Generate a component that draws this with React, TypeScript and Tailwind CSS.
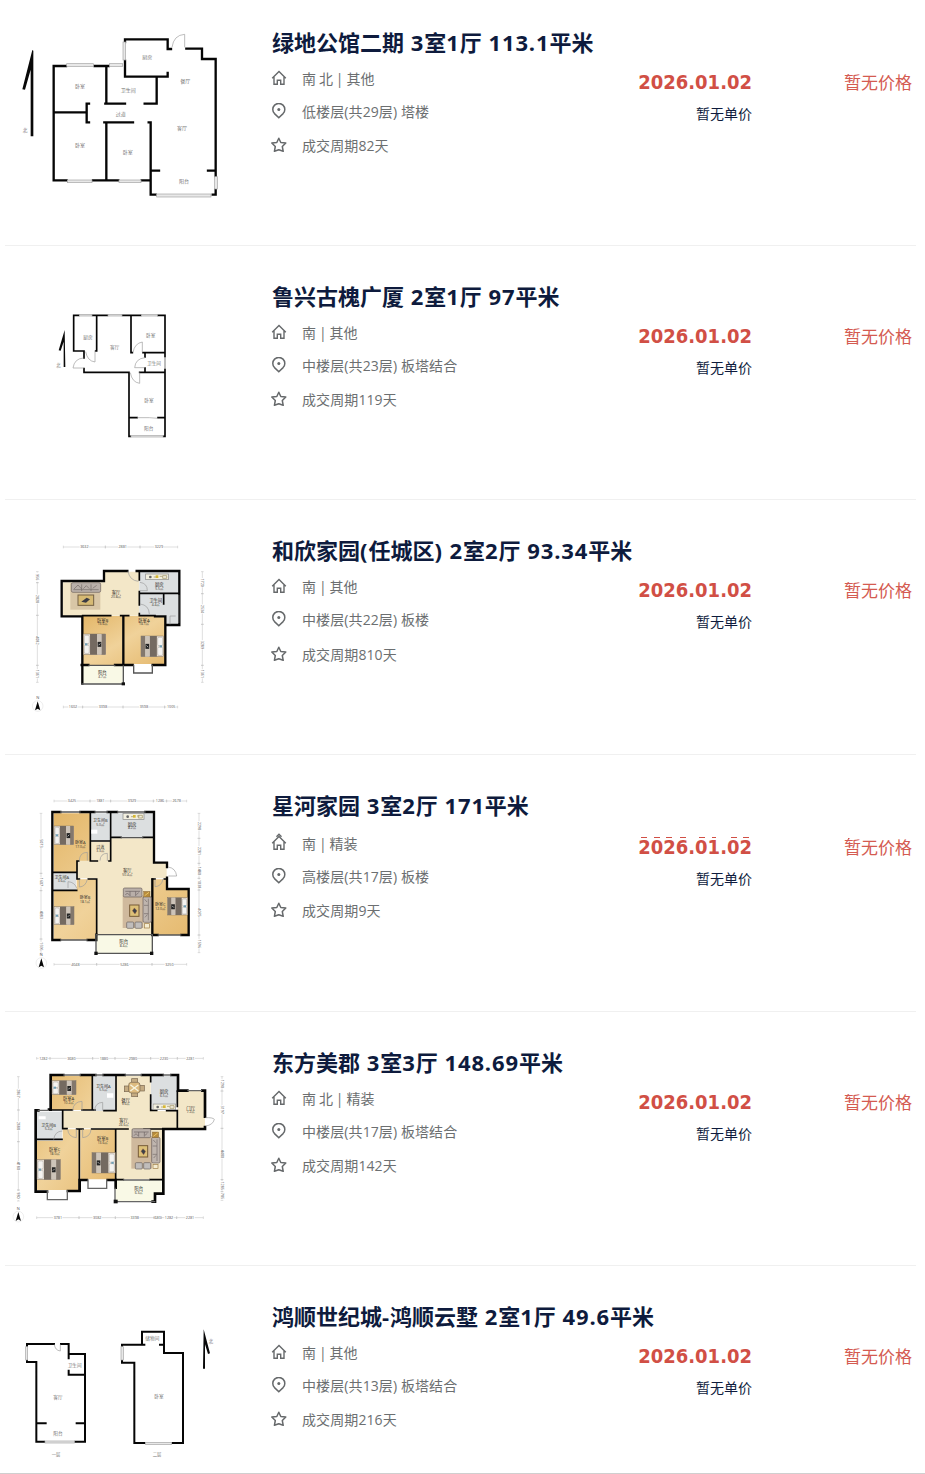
import type {ReactNode} from 'react'
import clsx from 'clsx'

type Listing = {
  title: string
  facing: string
  floor: string
  cycle: string
  plan: ReactNode
  rowClass: string
  planClass: string
  infoClass: string
  facingClass: string
  floorClass: string
  cycleClass: string
  priceClass: string
  seam?: boolean
}

const listings: Listing[] = [
  {
    title: '绿地公馆二期 3室1厅 113.1平米',
    facing: '南 北 | 其他',
    floor: '低楼层(共29层) 塔楼',
    cycle: '成交周期82天',
    plan: <PlanOne />,
    rowClass: 'h-[246px]',
    planClass: 'pt-[20px]',
    infoClass: 'pt-[26px]',
    facingClass: 'mt-[11px]',
    floorClass: 'mt-[13px]',
    cycleClass: 'mt-[14px]',
    priceClass: 'pt-[68px]',
  },
  {
    title: '鲁兴古槐广厦 2室1厅 97平米',
    facing: '南 | 其他',
    floor: '中楼层(共23层) 板塔结合',
    cycle: '成交周期119天',
    plan: <PlanTwo />,
    rowClass: 'h-[254px]',
    planClass: 'pt-[54px]',
    infoClass: 'pt-[34px]',
    facingClass: 'mt-[11px]',
    floorClass: 'mt-[13px]',
    cycleClass: 'mt-[14px]',
    priceClass: 'pt-[76px]',
  },
  {
    title: '和欣家园(任城区) 2室2厅 93.34平米',
    facing: '南 | 其他',
    floor: '中楼层(共22层) 板楼',
    cycle: '成交周期810天',
    plan: <PlanThree />,
    rowClass: 'h-[255px]',
    planClass: 'pt-[35px]',
    infoClass: 'pt-[34px]',
    facingClass: 'mt-[11px]',
    floorClass: 'mt-[13px]',
    cycleClass: 'mt-[15px]',
    priceClass: 'pt-[76px]',
  },
  {
    title: '星河家园 3室2厅 171平米',
    facing: '南 | 精装',
    floor: '高楼层(共17层) 板楼',
    cycle: '成交周期9天',
    plan: <PlanFour />,
    rowClass: 'h-[257px]',
    planClass: 'pt-[35px]',
    infoClass: 'pt-[34px]',
    facingClass: 'mt-[13px]',
    floorClass: 'mt-[13px]',
    cycleClass: 'mt-[14px]',
    priceClass: 'pt-[78px]',
    seam: true,
  },
  {
    title: '东方美郡 3室3厅 148.69平米',
    facing: '南 北 | 精装',
    floor: '中楼层(共17层) 板塔结合',
    cycle: '成交周期142天',
    plan: <PlanFive />,
    rowClass: 'h-[254px]',
    planClass: 'pt-[33px]',
    infoClass: 'pt-[34px]',
    facingClass: 'mt-[11px]',
    floorClass: 'mt-[13px]',
    cycleClass: 'mt-[14px]',
    priceClass: 'pt-[76px]',
  },
  {
    title: '鸿顺世纪城-鸿顺云墅 2室1厅 49.6平米',
    facing: '南 | 其他',
    floor: '中楼层(共13层) 板塔结合',
    cycle: '成交周期216天',
    plan: <PlanSix />,
    rowClass: 'h-[208px]',
    planClass: 'pt-[44px]',
    infoClass: 'pt-[34px]',
    facingClass: 'mt-[11px]',
    floorClass: 'mt-[13px]',
    cycleClass: 'mt-[14px]',
    priceClass: 'pt-[76px]',
  },
]

export default function App() {
  return (
    <main className="h-[1474px] w-[925px] overflow-hidden border-b border-[#cfcfcf] bg-white font-['Open_Sans','Noto_Sans_CJK_SC',sans-serif]">
      {listings.map((listing) => (
        <ListingRow key={listing.title} listing={listing} />
      ))}
    </main>
  )
}

function ListingRow(props: {listing: Listing}) {
  const {listing} = props
  return (
    <article
      className={clsx(
        'mr-[9px] ml-[5px] flex border-b border-[#f0f0f0] last:border-b-0',
        listing.rowClass,
      )}
    >
      <div className={clsx('-ml-[5px] w-[240px] shrink-0', listing.planClass)}>
        {listing.plan}
      </div>
      <div
        className={clsx(
          'ml-[32px] w-[400px] shrink-0 whitespace-nowrap',
          listing.infoClass,
        )}
      >
        <h2 className="h-8 text-[22px] leading-8 font-bold text-[#0e1b3d] [word-spacing:1px]">
          {/* Digits and punctuation are set a little wider than the hanzi */}
          {listing.title.split(/([\d.()-]+)/).map((part, index) => (
            <span key={index} className={index % 2 ? 'tracking-[0.9px]' : ''}>
              {part}
            </span>
          ))}
        </h2>
        <InfoLine
          className={clsx('[word-spacing:-0.7px]', listing.facingClass)}
          icon={<HouseIcon seam={listing.seam} />}
        >
          {listing.facing}
        </InfoLine>
        <InfoLine
          className={clsx('tracking-[0.1px]', listing.floorClass)}
          icon={<PinIcon />}
        >
          {listing.floor}
        </InfoLine>
        <InfoLine
          className={clsx('tracking-[0.1px]', listing.cycleClass)}
          icon={<StarIcon />}
        >
          {listing.cycle}
        </InfoLine>
      </div>
      <div
        className={clsx(
          'flex flex-1 items-start justify-between pr-[4px] whitespace-nowrap',
          listing.priceClass,
        )}
      >
        <div className="-ml-[34px] w-[114px] text-right">
          <div className="relative h-7 font-['DejaVu_Sans_Condensed','DejaVu_Sans',sans-serif] text-[20px] leading-7 font-bold text-[#d14f45]">
            2026.01.02
            {listing.seam && (
              <Seam d="M3 .5h6M16 .5h6M28 .5h6M42 .5h6M61 .5h6M74 .5h4M93 .5h6M105 .5h6" />
            )}
          </div>
          <div className="mt-2 h-5 text-sm leading-5 text-[#0e1b3d]">
            暂无单价
          </div>
        </div>
        <div className="relative mt-px h-7 text-[17px] leading-7 text-[#d45b51]">
          暂无价格
          {listing.seam && <Seam d="M4 .5h1.5" />}
        </div>
      </div>
    </article>
  )
}

// Short ticks that sit just above the glyphs
function Seam(props: {d: string}) {
  return (
    <svg
      aria-hidden
      className="absolute top-[4px] left-0 h-px w-[114px]"
      viewBox="0 0 114 1"
    >
      <path d={props.d} stroke="#d14f45" />
    </svg>
  )
}

function InfoLine(props: {
  className: string
  icon: ReactNode
  children: ReactNode
}) {
  return (
    <div
      className={clsx(
        'flex h-5 items-center text-sm leading-5 text-[#6c6f71]',
        props.className,
      )}
    >
      <span className="-ml-px w-[31px]">{props.icon}</span>
      <span>{props.children}</span>
    </div>
  )
}

function HouseIcon(props: {seam?: boolean}) {
  return (
    <svg
      className="mb-[2px] h-4 w-4 overflow-visible"
      viewBox="0 0 16 16"
      fill="none"
      stroke="#66696b"
      strokeWidth="1.4"
    >
      <path d="M1.2 8.3 8 1.4l6.8 6.9M3 6.8v7.5h3.3v-4h3.4v4H13V6.8" />
      {props.seam && <path d="M5.5 1.8 8-.8l2.5 2.6" />}
    </svg>
  )
}

function PinIcon() {
  return (
    <svg
      className="mb-[3px] h-4 w-4"
      viewBox="0 0 16 16"
      fill="none"
      stroke="#66696b"
      strokeWidth="1.5"
    >
      <path d="M7.8 14.8 3.5 10.6a6 6 0 1 1 8.6 0Z" />
      <circle cx="7.8" cy="6.6" r="1.5" fill="#66696b" stroke="none" />
    </svg>
  )
}

function StarIcon() {
  return (
    <svg
      className="mb-[2px] h-4 w-4"
      viewBox="0 0 16 16"
      fill="none"
      stroke="#66696b"
      strokeWidth="1.5"
      strokeLinejoin="round"
    >
      <path d="m7.8 1.3 2 4.2 5 .5-3.5 3.5.9 4.8-4.4-1.6-4.4 1.6.9-4.8L.8 6l5-.5Z" />
    </svg>
  )
}

/* Floor plan primitives, three drawing units per pixel */

function Plan(props: {x?: number; height: number; children: ReactNode}) {
  return (
    <svg
      width="240"
      height={props.height}
      viewBox={`${-(props.x ?? 0) * 3} 0 720 ${props.height * 3}`}
      fill="none"
    >
      <defs>
        <linearGradient id="wood" x1="0" y1="0" x2="1" y2="1">
          <stop offset="0" stopColor="#e3b668" />
          <stop offset=".5" stopColor="#f0d29a" />
          <stop offset="1" stopColor="#e5b96e" />
        </linearGradient>
      </defs>
      {props.children}
    </svg>
  )
}

function Walls(props: {d: string; w?: number; color?: string}) {
  return (
    <path
      d={props.d}
      stroke={props.color ?? '#050505'}
      strokeWidth={props.w ?? 7}
      strokeLinecap="square"
    />
  )
}

function Thin(props: {d: string}) {
  return <path d={props.d} stroke="#9b9b9b" strokeWidth="2" />
}

function Windows(props: {boxes: number[][]}) {
  return props.boxes.map(([x, y, w, h]) => (
    <rect
      key={`${x}-${y}`}
      x={x}
      y={y}
      width={w}
      height={h}
      fill="#e8e8e8"
      stroke="#a3a3a3"
      strokeWidth="2"
    />
  ))
}

function Label(props: {
  x: number
  y: number
  text: string
  area?: string
  size?: number
}) {
  return (
    <text
      x={props.x}
      y={props.y}
      fontSize={props.size ?? 15}
      textAnchor="middle"
      fill={props.area ? '#33302b' : '#777'}
    >
      {props.text}
      {props.area && (
        <tspan x={props.x} dy="11" fontSize="10">
          {props.area}
        </tspan>
      )}
    </text>
  )
}

function Floor(props: {d: string; kind: 'wood' | 'hall' | 'tile' | 'deck'}) {
  const fills = {
    wood: 'url(#wood)',
    hall: '#f3e7c8',
    tile: '#dcdfe0',
    deck: '#f9f9e6',
  }
  return <path d={props.d} fill={fills[props.kind]} />
}

// Headboard on the left; flip puts it on the right
function Bed(props: {x: number; y: number; w: number; h: number; flip?: boolean}) {
  const {x, y, w, h, flip} = props
  return (
    <g
      transform={
        flip ? `translate(${x + w} ${y}) scale(-1 1)` : `translate(${x} ${y})`
      }
    >
      <rect width={w} height={h} fill="#e6ddd3" stroke="#81735f" strokeWidth="1.5" />
      <rect x="3" y="4" width={w * 0.22} height={h * 0.4} rx="4" fill="#f5f3f0" stroke="#8d8885" />
      <rect x="3" y={h * 0.54} width={w * 0.22} height={h * 0.4} rx="4" fill="#f5f3f0" stroke="#8d8885" />
      <path d={`M5 ${h * 0.5}h7`} stroke="#6fa0b8" strokeWidth="6" />
      <rect x={w * 0.3} width={w * 0.32} height={h} fill="#746a61" />
      <rect x={w * 0.62} width={w * 0.2} height={h} fill="#cdc4b9" />
      <rect x={w * 0.82} width={w * 0.18} height={h} fill="#83786d" />
      <rect x={w * 0.64} y={h * 0.38} width="11" height="15" fill="#242424" />
      <path d={`M${w * 0.64 + 3} ${h * 0.38 + 10}l5-5`} stroke="#eee" strokeWidth="2" />
    </g>
  )
}

function SeatingArea(props: {x: number; y: number}) {
  return (
    <g transform={`translate(${props.x} ${props.y})`}>
      <rect x="0" y="22" width="62" height="98" fill="#cfb99d" />
      <rect x="2" y="0" width="56" height="27" rx="4" fill="#b9afa9" stroke="#685d59" strokeWidth="2" />
      <path d="M8 10h44M22 10v14M39 10v14M8 21l6-6 7 7M41 20l7-6" stroke="#6b6160" strokeWidth="2" />
      <rect x="61" y="26" width="25" height="77" rx="4" fill="#bfb5ae" stroke="#665a57" strokeWidth="2" />
      <path d="M77 32v65M64 52h13M64 77h13M66 34l7 8M67 88l7-8" stroke="#746b69" strokeWidth="2" />
      <rect x="63" y="10" width="19" height="17" fill="#b78b3c" stroke="#70552d" />
      <path d="m66 23 13-10" stroke="#eac565" strokeWidth="3" />
      <rect x="21" y="51" width="28" height="34" fill="#dcc078" stroke="#765b38" strokeWidth="3" />
      <path d="m29 68 6-8 8 8-6 10Z" fill="#3b4148" stroke="#b35c3f" />
      <rect x="12" y="102" width="21" height="19" rx="3" fill="#c0bdbb" stroke="#68625f" strokeWidth="2" />
      <rect x="37" y="102" width="21" height="19" rx="3" fill="#c0bdbb" stroke="#68625f" strokeWidth="2" />
      <rect x="65" y="107" width="15" height="13" fill="#f4ecd1" stroke="#9b7941" strokeWidth="2" />
    </g>
  )
}

function Stove(props: {x: number; y: number; w: number}) {
  return (
    <g transform={`translate(${props.x} ${props.y})`}>
      <rect width={props.w} height="17" fill="#f2efdf" stroke="#888" strokeWidth="2" />
      <circle cx="14" cy="9" r="4" fill="#666" />
      <path d={`M24 9h8m10-2h8M${props.w - 17} 5v8h12V5Z`} stroke="#9a8d5c" strokeWidth="2" />
      <rect x="30" y="4" width="8" height="8" fill="#d7b733" />
    </g>
  )
}

function Compass(props: {x: number; y: number}) {
  return (
    <g transform={`translate(${props.x} ${props.y})`}>
      <circle r="16" stroke="#ccc" />
      <path d="M0-14 8 13 0 8-8 13Z" fill="#080808" />
      <text y="-20" fontSize="12" fill="#555" textAnchor="middle">
        N
      </text>
    </g>
  )
}

type Dim = [from: number, to: number, value: string]

function Dims(props: {at: number; spans: Dim[]; vertical?: boolean}) {
  return (
    <g
      transform={
        props.vertical ? `translate(${props.at} 0) rotate(90)` : `translate(0 ${props.at})`
      }
    >
      {props.spans.map(([from, to, value]) => (
        <g key={from}>
          <path
            d={`M${from} 0H${(from + to) / 2 - 14}M${(from + to) / 2 + 14} 0H${to}M${from} -4v8M${to} -4v8`}
            stroke="#bcbcbc"
            strokeWidth="1.5"
          />
          <text x={(from + to) / 2} y="4" fontSize="11" fill="#555" textAnchor="middle">
            {value}
          </text>
        </g>
      ))}
    </g>
  )
}

function PlanOne() {
  return (
    <Plan height={190}>
      <path d="M97 90 67 208l8 1 17-60v200h8V92Z" fill="#080808" />
      <Label x={75} y={335} text="北" size={14} />
      <Walls d="M375 66V58H503V87H513M559 86H606V117H647V468M624 452H647M647 509V524H638M467 524H452V307H446M452 452H477M452 481H425M355 481H279M200 481H161V138H198M284 138H326M375 122V170H503V159M319 138V251M316 251H375M434 251H470V170M161 277H260M267 251H260V307H267M313 307H399M319 307V481" />
      <Windows
        boxes={[
          [200, 131, 80, 8],
          [328, 131, 40, 8],
          [369, 66, 8, 54],
          [202, 480, 74, 8],
          [357, 480, 66, 8],
          [470, 522, 163, 9],
          [644, 470, 8, 37],
        ]}
      />
      <Thin d="M516 82q5-37 38-39v39" />
      <Label x={442} y={116} text="厨房" />
      <Label x={556} y={190} text="餐厅" />
      <Label x={240} y={204} text="卧室" />
      <Label x={385} y={217} text="卫生间" />
      <Label x={362} y={287} text="过道" />
      <Label x={546} y={330} text="客厅" />
      <Label x={240} y={382} text="卧室" />
      <Label x={383} y={403} text="卧室" />
      <Label x={552} y={490} text="阳台" />
    </Plan>
  )
}

function PlanTwo() {
  return (
    <Plan x={40} height={150}>
      <path d="m74 90-18 61 6 1 9-27v76h5Z" fill="#080808" />
      <Label x={55} y={202} text="北" size={13} />
      <Walls
        w={5}
        d="M101 46V153H132M132 153V174M132 206V217H267V409M101 46H116M158 46H202M248 46H302M354 46H375V171M170 46V153H167M273 46V158H277M309 158H375M315 158V171M315 204V216M299 217H375M375 207V409M267 409H271M371 409H375M267 353H291M354 353H375"
      />
      <Windows
        boxes={[
          [118, 43, 38, 5],
          [204, 43, 42, 5],
          [304, 43, 48, 5],
          [373, 173, 4, 32],
          [273, 407, 96, 4],
        ]}
      />
      <Thin d="M137 155q5 28 28 31v-32M130 174q-27 2-31 30h32M279 157q5-27 28-31v31M315 173q-29 3-31 30h30M271 218q5 29 28 32v-33M292 353h36l26 2" />
      <Label x={144} y={118} text="厨房" size={14} />
      <Label x={224} y={148} text="客厅" size={14} />
      <Label x={332} y={112} text="卧室" size={14} />
      <Label x={342} y={196} text="卫生间" size={14} />
      <Label x={327} y={306} text="卧室" size={14} />
      <Label x={326} y={391} text="阳台" size={14} />
    </Plan>
  )
}

function PlanThree() {
  return (
    <Plan x={20} height={185}>
      <Dims at={36} spans={[[130, 256, '3632'], [256, 360, '2881'], [360, 473, '3229']]} />
      <Dims at={516} spans={[[130, 188, '1602'], [188, 309, '3398'], [309, 434, '3598'], [434, 473, '1005']]} />
      <Dims vertical at={52} spans={[[110, 143, '956'], [143, 241, '2828'], [241, 391, '4082'], [391, 442, '1361']]} />
      <Dims vertical at={547} spans={[[110, 176, '1720'], [176, 268, '2534'], [268, 391, '3289'], [391, 442, '1361']]} />
      <Compass x={53} y={513} />
      <Floor kind="hall" d="M128 142H250V110H358V242H128Z" />
      <Floor kind="tile" d="M358 110H476V270H438V240H358Z" />
      <Floor kind="wood" d="M188 243H308V390H188ZM312 243H436V387H312Z" />
      <Floor kind="deck" d="M188 393H308V446H188Z" />
      <Walls w={7} d="M187 244H125V138H252V108H322M350 108H478V270H442M187 244V446M185 390H205M285 390H310V244M310 390H338M398 390H436V244H405" />
      <Walls w={5} d="M358 108V135M358 170V210M360 175H475M431 175V207M358 236V242H405M188 242H272M302 242H326" />
      <Walls w={4} color="#555" d="M187 447H310V393M207 391H284M341 391V414H397V391M476 182V262" />
      <rect x="305" y="442" width="10" height="9" fill="#111" />
      <Thin d="M324 108q4 28 31 31M360 142q22 3 22 25h-23M360 207q27 3 28 30M450 268v-25h17" />
      <rect x="151" y="144" width="90" height="80" fill="#d8c6a6" />
      <rect x="154" y="143" width="88" height="29" rx="5" fill="#bab0aa" stroke="#6d615d" strokeWidth="2" />
      <path d="M160 164h76M185 148v20M213 148v20M162 162l12-12 11 12M190 161l9-9 9 9M218 160l12-9" stroke="#746a67" strokeWidth="2" />
      <rect x="174" y="180" width="47" height="31" fill="#d6ba74" stroke="#746044" strokeWidth="3" />
      <path d="m184 200 16-12 10 5-12 10Z" fill="#3a3b44" />
      <Stove x={377} y={117} w={68} />
      <Bed x={190} y={297} w={67} h={62} />
      <Bed x={363} y={303} w={68} h={62} flip />
      <Label x={288} y={178} text="客厅" area="20.8㎡" size={13} />
      <Label x={418} y={154} text="厨房" area="5.5㎡" size={13} />
      <Label x={407} y={202} text="卫生间" area="4.4㎡" size={13} />
      <Label x={248} y={260} text="卧室B" area="13.6㎡" size={13} />
      <Label x={372} y={260} text="卧室A" area="14.1㎡" size={13} />
      <Label x={247} y={417} text="阳台" area="4.7㎡" size={13} />
    </Plan>
  )
}

function PlanFour() {
  return (
    <Plan x={20} height={185}>
      <Dims at={33} spans={[[102, 210, '3425'], [210, 272, '1881'], [272, 400, '3929'], [400, 440, '1286'], [440, 500, '2678']]} />
      <Dims at={523} spans={[[102, 230, '4048'], [230, 396, '5286'], [396, 500, '3250']]} />
      <Dims vertical at={63} spans={[[70, 250, '5073'], [250, 302, '1607'], [302, 447, '4083'], [447, 492, '1596']]} />
      <Dims vertical at={537} spans={[[70, 145, '2298'], [145, 220, '2281'], [220, 265, '1480'], [265, 300, '1038'], [300, 435, '4075'], [435, 488, '1596']]} />
      <Compass x={64} y={519} />
      <Floor kind="hall" d="M172 155H273V145H400V218H440V265H396V433H231V265H172Z" />
      <Floor kind="tile" d="M212 70H270V153H212ZM275 70H400V142H275ZM102 250H168V300H102Z" />
      <Floor kind="wood" d="M101 70H211V212H172V247H101ZM101 303H170V268H230V449H101ZM398 268H440V298H506V435H398Z" />
      <Floor kind="deck" d="M231 435H397V489H231Z" />
      <Walls w={7} d="M121 66H97V450H120M203 450H229V434M181 66H223M263 66H291M376 66H402V218H441V231M441 263V297H506V435H484M413 435H397V268" />
      <Walls w={5} d="M211 68V213H232M171 213H176M171 213V264M101 247H170M101 301H170M212 153H270M272 68V213H267M276 142H303M369 142H400M171 267H178M205 267H230V433M397 267H405M433 267H440" />
      <Walls w={4} color="#555" d="M122 66H180M225 66H262M293 66H375M122 450H201M229 434H397V490H228V435M415 435H482M304 143H368" />
      <rect x="223" y="485" width="10" height="10" fill="#111" />
      <rect x="390" y="485" width="10" height="10" fill="#111" />
      <Thin d="M178 212q1-25 24-25v25M240 212q1-22 22-22v23M144 294v-19q20 1 27 21M178 269v22q19-1 24-23M444 231q23 3 26 27h-25M405 269v21q20-1 24-23" />
      <path d="M214 131v-12h18v12Z" fill="#fff" />
      <SeatingArea x={308} y={294} />
      <Stove x={309} y={71} w={63} />
      <Bed x={102} y={108} w={59} h={56} />
      <Bed x={102} y={350} w={60} h={54} />
      <Bed x={443} y={323} w={60} h={52} flip />
      <Label x={181} y={162} text="卧室A" area="17.0㎡" size={12} />
      <Label x={241} y={97} text="卫生间B" area="5.0㎡" size={12} />
      <Label x={336} y={107} text="厨房" area="8.2㎡" size={13} />
      <Label x={241} y={176} text="过道" area="3.3㎡" size={12} />
      <Label x={322} y={247} text="客厅" area="50.4㎡" size={13} />
      <Label x={125} y={266} text="卫生间A" area="3.6㎡" size={12} />
      <Label x={195} y={328} text="卧室B" area="18.1㎡" size={12} />
      <Label x={421} y={349} text="卧室C" area="12.0㎡" size={12} />
      <Label x={311} y={460} text="阳台" area="8.4㎡" size={13} />
    </Plan>
  )
}

function PlanFive() {
  return (
    <Plan height={185}>
      <Dims at={40} spans={[[110, 150, '1282'], [150, 278, '3680'], [278, 345, '1880'], [345, 452, '2980'], [452, 532, '2230'], [532, 610, '2281']]} />
      <Dims at={518} spans={[[110, 237, '3781'], [237, 346, '3082'], [346, 462, '3398'], [462, 484, '680'], [484, 530, '1282'], [530, 610, '2281']]} />
      <Dims vertical at={55} spans={[[95, 195, '2867'], [195, 290, '2688'], [290, 435, '4180'], [435, 468, '980']]} />
      <Dims vertical at={666} spans={[[95, 138, '1290'], [138, 250, '3197'], [250, 404, '4480'], [404, 440, '1285'], [440, 466, '785']]} />
      <Compass x={55} y={515} />
      <Floor kind="hall" d="M188 198H348V92H452V198H532V138H615V250H486V403H348V250H188Z" />
      <Floor kind="tile" d="M280 92H345V198H280ZM453 92H530V176H453ZM109 200H186V286H109Z" />
      <Floor kind="wood" d="M153 92H276V195H153ZM109 287H188V253H236V435H109ZM241 253H345V403H241Z" />
      <Floor kind="deck" d="M346 405H485V446H462V469H346Z" />
      <Walls w={8} d="M190 90H152V194H147M243 90H286M311 90H374M426 90H488M514 90H534V137H562M607 137H615V215M615 246V252H490V446H465V470H458M107 198V440H141M107 196H115M204 438H239V405H260M323 405H347V428" />
      <Walls w={5} d="M153 195H217M246 195H285M277 92V195M312 197H348V92M452 92V110M452 150V196H470M500 197H532V250M532 138V184M188 198V251H201M186 283H110M230 252H249M238 252V435M275 252H384M347 252V402M348 404H370M450 404H486M432 252H485" />
      <Walls w={4} color="#666" d="M192 90H241M287 90H309M376 90H424M490 90H512M564 137H604M115 196H145M142 438V464H202V438M264 405V430H320V405M345 430V470H464M371 405H448" />
      <rect x="341" y="464" width="12" height="11" fill="#111" />
      <Thin d="M218 197q2-27 28-28v28M284 197q1-24 24-25v25M161 284q3-25 26-26M203 253q2 23 26 25v-25M248 253v25q23-2 25-24M616 218q22-1 27 5-4 17-26 20" />
      <path d="M116 214h21v9h-21ZM321 145h19v13h-19Z" fill="#fff" />
      <Bed x={156} y={107} w={72} h={42} />
      <Bed x={111} y={344} w={70} h={60} />
      <Bed x={276} y={323} w={70} h={61} flip />
      <SeatingArea x={394} y={251} />
      <g fill="#c4ab82" stroke="#786650" strokeWidth="2">
        <rect x="395" y="101" width="18" height="14" />
        <rect x="373" y="123" width="14" height="17" />
        <rect x="395" y="141" width="18" height="14" />
        <rect x="419" y="121" width="14" height="17" />
        <rect x="386" y="112" width="34" height="32" rx="8" fill="#ddbb7f" />
      </g>
      <path d="m391 119 24 19m0-18-24 18" stroke="#f7f4df" strokeWidth="4" />
      <Stove x={459} y={177} w={68} />
      <Label x={206} y={165} text="卧室A" area="10.2㎡" size={13} />
      <Label x={310} y={128} text="卫生间A" area="5.5㎡" size={12} />
      <Label x={377} y={170} text="餐厅" area="9.6㎡" size={13} />
      <Label x={492} y={144} text="厨房" area="6.5㎡" size={13} />
      <Label x={572} y={194} text="门厅" area="7.2㎡" size={13} />
      <Label x={371} y={231} text="客厅" area="24.6㎡" size={13} />
      <Label x={146} y={245} text="卫生间B" area="5.2㎡" size={12} />
      <Label x={164} y={318} text="卧室C" area="18.0㎡" size={13} />
      <Label x={308} y={285} text="卧室B" area="13.6㎡" size={13} />
      <Label x={416} y={436} text="阳台" area="6.3㎡" size={13} />
    </Plan>
  )
}

function PlanSix() {
  return (
    <Plan height={163}>
      <Walls
        w={6}
        d="M81 108V102H162M183 102H206V145M206 132H255V395H226M206 182V194H255M81 152V156H109V395H132M109 340H137M230 340H255M366 108V104H433M426 104V65H492V129H549V399H518M480 104H492M366 152V158H403V399H433"
      />
      <Windows
        boxes={[
          [77, 110, 6, 40],
          [135, 393, 88, 6],
          [363, 110, 7, 40],
          [436, 397, 79, 6],
        ]}
      />
      <Thin d="M163 103q2 18 18 20v-20" />
      <path d="m611 58 19 72-6 2-9-29v73h-6Z" fill="#080808" />
      <Label x={633} y={100} text="北" size={13} />
      <Label x={224} y={170} text="卫生间" size={14} />
      <Label x={174} y={266} text="客厅" size={14} />
      <Label x={174} y={376} text="阳台" size={14} />
      <Label x={457} y={91} text="储物间" size={14} />
      <Label x={477} y={264} text="卧室" size={14} />
      <Label x={168} y={437} text="一层" size={13} />
      <Label x={471} y={439} text="二层" size={13} />
    </Plan>
  )
}
